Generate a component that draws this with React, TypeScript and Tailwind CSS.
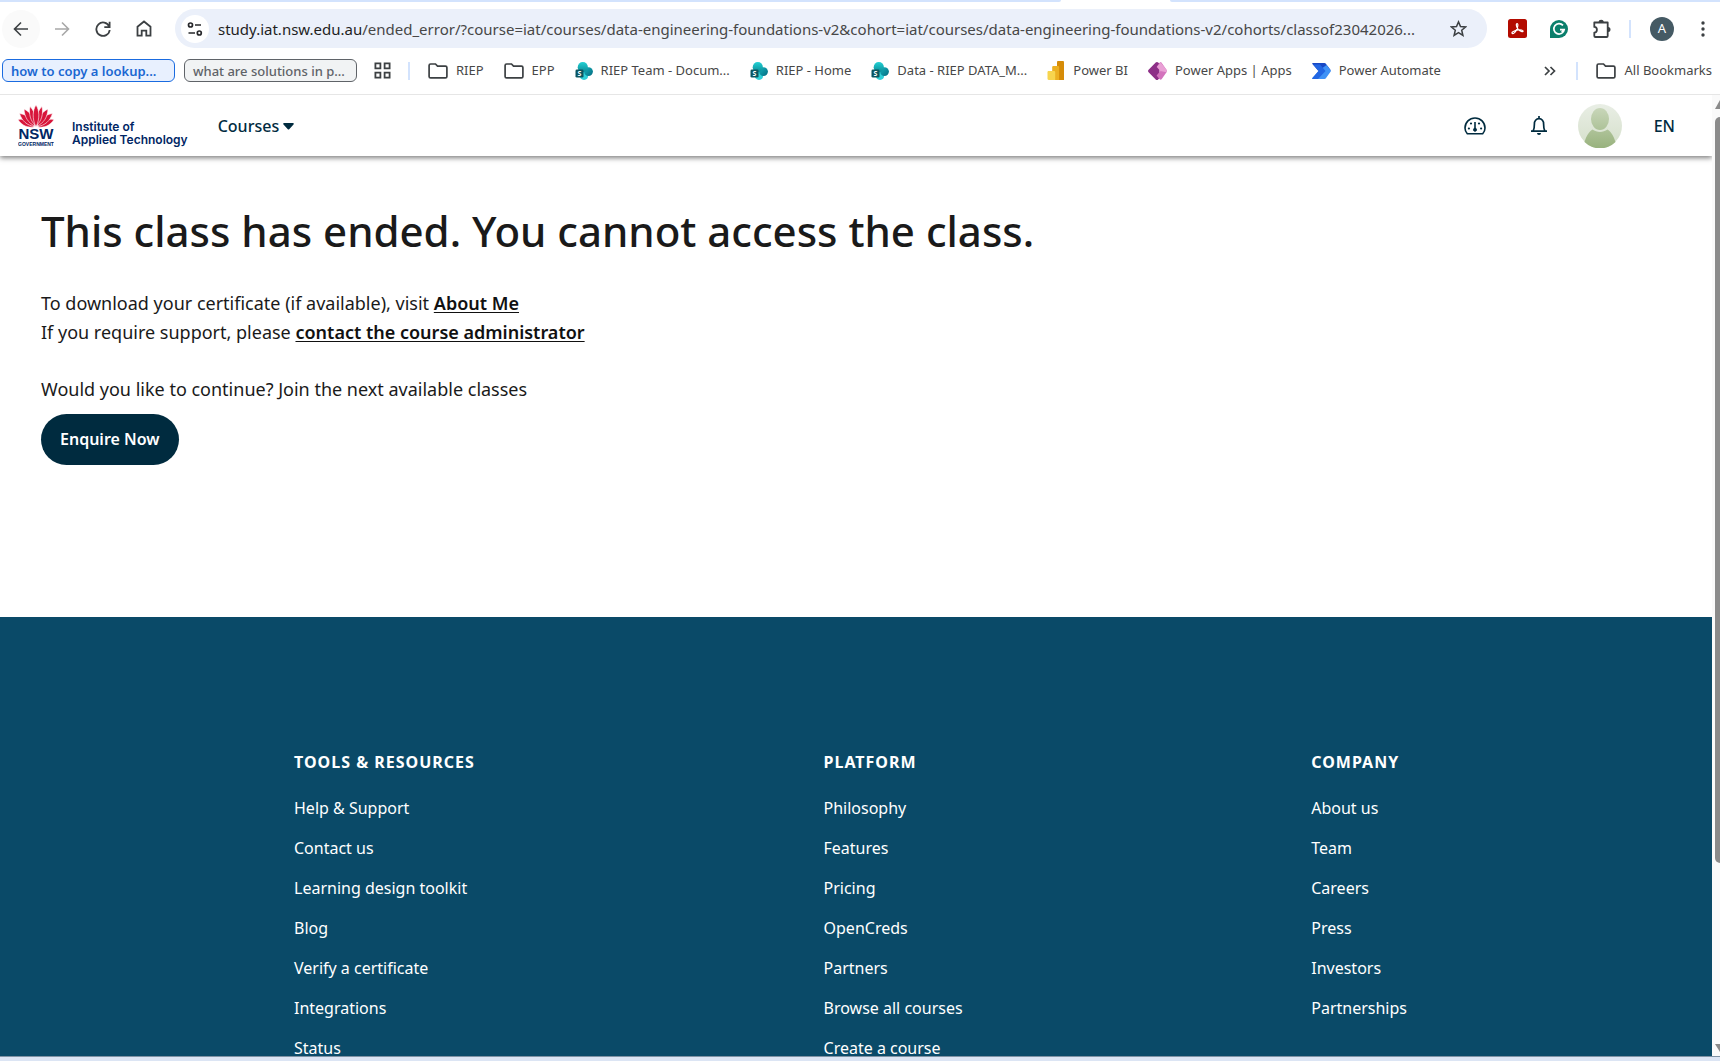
import type { ReactNode } from 'react'

interface Bookmark {
  label: string
  icon: ReactNode
}

const FOOTER = [
  {
    title: 'Tools & Resources',
    links: [
      'Help & Support',
      'Contact us',
      'Learning design toolkit',
      'Blog',
      'Verify a certificate',
      'Integrations',
      'Status',
    ],
  },
  {
    title: 'Platform',
    links: ['Philosophy', 'Features', 'Pricing', 'OpenCreds', 'Partners', 'Browse all courses', 'Create a course'],
  },
  {
    title: 'Company',
    links: ['About us', 'Team', 'Careers', 'Press', 'Investors', 'Partnerships'],
  },
]

function FolderIcon() {
  return (
    <svg width="20" height="18" viewBox="0 0 20 18" fill="none" stroke="#3c4043" strokeWidth="1.7" className="shrink-0">
      <path d="M2.6 2h4.9l2 2.1h7.9c.9 0 1.5.6 1.5 1.4v9c0 .8-.6 1.4-1.5 1.4H2.6c-.9 0-1.5-.6-1.5-1.4V3.4C1.1 2.6 1.7 2 2.6 2z" />
    </svg>
  )
}

function SharePointIcon() {
  return (
    <svg width="18" height="18" viewBox="0 0 18 18" className="shrink-0">
      <defs>
        <linearGradient id="sp-top" x1="0" y1="0" x2="0" y2="1">
          <stop offset="0" stopColor="#22d0d3" />
          <stop offset="1" stopColor="#0a8a96" />
        </linearGradient>
        <linearGradient id="sp-right" x1="0" y1="0" x2="1" y2="1">
          <stop offset="0" stopColor="#14b4bd" />
          <stop offset="1" stopColor="#056a80" />
        </linearGradient>
      </defs>
      <circle cx="9" cy="13.8" r="4.1" fill="#30d0d8" />
      <circle cx="13.5" cy="9.6" r="4.4" fill="url(#sp-right)" />
      <circle cx="7.8" cy="5.2" r="5.1" fill="url(#sp-top)" />
      <rect x="0.5" y="7.6" width="8" height="8" rx="1.3" fill="#0b5560" />
      <text x="4.5" y="14" textAnchor="middle" fontSize="7" fontWeight="700" fill="#fff" fontFamily="Open Sans, sans-serif">
        S
      </text>
    </svg>
  )
}

function PowerBiIcon() {
  return (
    <svg width="18" height="19" viewBox="0 0 18 19" className="shrink-0">
      <path d="M10 1.2C10 .6 10.5 0 11.2 0h4.6c.7 0 1.2.6 1.2 1.2V19h-7z" fill="#d68c08" />
      <path d="M5.2 6.2c0-.6.5-1.2 1.2-1.2h4.5c.7 0 1.2.6 1.2 1.2V19H5.2z" fill="#ecb022" />
      <path d="M.5 11.2c0-.6.5-1.2 1.2-1.2H7c.7 0 1.2.6 1.2 1.2V19H1.7c-.7 0-1.2-.5-1.2-1.2z" fill="#f7d54f" />
    </svg>
  )
}

function PowerAppsIcon() {
  return (
    <svg width="19" height="18" viewBox="0 0 19 18" className="shrink-0">
      <path d="M7.7.6c.7-.7 1.8-.7 2.5 0L11.5 2v14l-1.3 1.4c-.7.7-1.8.7-2.5 0L.6 10.2c-.7-.7-.7-1.7 0-2.4z" fill="#8d2f87" />
      <path d="M8.6 5l3-4.3c.6-.5 1.4-.5 2 0l4.9 7.1c.5.7.5 1.7 0 2.4l-4.9 7.1c-.6.5-1.4.5-2 0l-3-3.8L12.4 9z" fill="#d373bd" />
      <path d="M12.7.6l5.8 7.2c.5.7.5 1.7 0 2.4L12.4 9 9 4.7z" fill="#e9a0d5" />
    </svg>
  )
}

function PowerAutomateIcon() {
  return (
    <svg width="19" height="16" viewBox="0 0 19 16" className="shrink-0">
      <path d="M1 0h11.5c.5 0 .9.2 1.2.5L19 7.4H6L.4 1C0 .5.4 0 1 0z" fill="#1848c4" />
      <path d="M6.500 8L.4 15c-.4.5 0 1 .6 1h11.5c.5 0 .9-.2 1.2-.5L18.7 8.600c.3-.4.3-.8 0-1.200L14.500 2z" fill="#3f92f6" />
      <path d="M6.500 8L.4 15c-.4.5 0 1 .6 1h5L13.500 8 8 1.500H1.200z" fill="#2266e3" />
    </svg>
  )
}

const BOOKMARKS: Bookmark[] = [
  { label: 'RIEP', icon: <FolderIcon /> },
  { label: 'EPP', icon: <FolderIcon /> },
  { label: 'RIEP Team - Docum...', icon: <SharePointIcon /> },
  { label: 'RIEP - Home', icon: <SharePointIcon /> },
  { label: 'Data - RIEP DATA_M...', icon: <SharePointIcon /> },
  { label: 'Power BI', icon: <PowerBiIcon /> },
  { label: 'Power Apps | Apps', icon: <PowerAppsIcon /> },
  { label: 'Power Automate', icon: <PowerAutomateIcon /> },
]

function IconButton({ label, children, className = '' }: { label: string; children: ReactNode; className?: string }) {
  return (
    <button type="button" aria-label={label} className={`flex shrink-0 items-center justify-center ${className}`}>
      {children}
    </button>
  )
}

function Toolbar() {
  return (
    <div className="flex h-[53px] items-center pr-[14px]">
      <div className="flex shrink-0 items-center gap-[3px] pl-[2px]">
        <IconButton label="Back" className="size-[38px] rounded-full bg-[#fafafa]">
          <svg width="16" height="16" viewBox="0 0 16 16" fill="none" stroke="#3c4043" strokeWidth="1.6">
            <path d="M15 8H2M8 1.500L1.500 8 8 14.500" />
          </svg>
        </IconButton>
        <IconButton label="Forward" className="size-[38px]">
          <svg width="16" height="16" viewBox="0 0 16 16" fill="none" stroke="#a8a8a8" strokeWidth="1.6">
            <path d="M1 8h13M8 1.500L14.500 8 8 14.500" />
          </svg>
        </IconButton>
        <IconButton label="Reload" className="size-[38px]">
          <svg width="16" height="16" viewBox="0 0 16 16" fill="none" stroke="#3c4043" strokeWidth="1.8">
            <path d="M14.2 5.500A6.700 6.700 0 1 0 14.700 9M14.600 .8v5.300H9.300" />
          </svg>
        </IconButton>
        <IconButton label="Home" className="size-[38px]">
          <svg width="16" height="17" viewBox="0 0 16 17" fill="none" stroke="#3c4043" strokeWidth="1.8">
            <path d="M1.500 6.700L8 1.500l6.500 5.200v9h-4.200v-5H5.700v5H1.500z" />
          </svg>
        </IconButton>
      </div>
      <div className="ml-3 flex h-[39px] min-w-0 flex-1 items-center rounded-full bg-[#ebf0fa] pr-5 pl-[6px]">
        <IconButton label="View site information" className="size-7 rounded-full bg-white">
          <svg width="16" height="16" viewBox="0 0 16 16" fill="none" stroke="#27282b" strokeWidth="1.7">
            <circle cx="3.5" cy="4" r="2" />
            <path d="M8 4h6M1.500 12H8" />
            <circle cx="12.3" cy="12" r="2" />
          </svg>
        </IconButton>
        <p className="ml-[9px] min-w-0 flex-1 overflow-hidden text-[15px] leading-6 whitespace-nowrap text-[#474747]">
          <span className="text-[#1f1f1f]">study.iat.nsw.edu.au</span>
          /ended_error/?course=iat/courses/data-engineering-foundations-v2&amp;cohort=iat/courses/data-engineering-foundations-v2/cohorts/classof23042026...
        </p>
        <IconButton label="Bookmark this tab">
          <svg width="17" height="17" viewBox="0 0 17 17" fill="none" stroke="#3c4043" strokeWidth="1.5">
            <path d="M8.500 1.900l2 4.700 5.100.4-3.900 3.300 1.200 5-4.400-2.700-4.400 2.700 1.200-5L1.400 7l5.100-.4z" />
          </svg>
        </IconButton>
      </div>
      <div className="ml-[21px] flex shrink-0 items-center">
        <IconButton label="Adobe Acrobat">
          <svg width="19" height="19" viewBox="0 0 19 19">
            <rect width="19" height="19" rx="2.5" fill="#b30b00" />
            <path
              d="M4 14.300c-.8-1.300 3.600-3 6.200-3.400 2.400-.3 5 .2 4.900 1.200-.2 1.100-2.800.2-4.800-1.600-1.700-1.600-2.700-5.800-1.300-6 1.500-.1.9 3.700-.6 6.600-1.300 2.500-3.600 4.500-4.400 3.200z"
              fill="none"
              stroke="#fff"
              strokeWidth="1.2"
            />
          </svg>
        </IconButton>
        <IconButton label="Grammarly" className="ml-[23px]">
          <svg width="18" height="18" viewBox="0 0 18 18">
            <path d="M9 0a9 9 0 1 1 0 18H0V9a9 9 0 0 1 9-9z" fill="#0b7f6c" />
            <path d="M13 5.400A5.200 5.200 0 1 0 14.200 9.600H10M11.700 12.200l2.500-2.600" fill="none" stroke="#fff" strokeWidth="1.7" />
          </svg>
        </IconButton>
        <IconButton label="Extensions" className="ml-6">
          <svg width="20" height="20" viewBox="0 0 20 20" fill="none" stroke="#3c4043" strokeWidth="1.8">
            <path d="M2.300 3.500h13.400v13.400c0 .8-.3 1.100-1.100 1.100H3.400c-.8 0-1.100-.3-1.100-1.100v-3.300c3.500-.2 3.500-5.500 0-5.700z" strokeLinejoin="round" />
            <path d="M7 3a2 2 0 0 1 4 0zM16 8.500a2 2 0 0 1 0 4z" fill="#3c4043" stroke="none" />
            <path d="M7.500 3.300a1.700 1.700 0 0 1 3.400 0M16 9a1.500 1.500 0 0 1 0 3.200" />
          </svg>
        </IconButton>
        <span className="ml-[17px] h-[18px] w-[2px] bg-[#d3e3fd]" />
        <IconButton label="Profile" className="ml-[19px] size-6 rounded-full bg-[#455a64] text-[13px] text-white">
          A
        </IconButton>
        <IconButton label="Chrome menu" className="ml-[26px]">
          <svg width="6" height="18" viewBox="0 0 6 18" fill="#3c4043">
            <circle cx="3" cy="3" r="1.7" />
            <circle cx="3" cy="9" r="1.7" />
            <circle cx="3" cy="15" r="1.7" />
          </svg>
        </IconButton>
      </div>
    </div>
  )
}

function BookmarksBar() {
  return (
    <div className="flex h-10 items-center border-b border-[#e6e6e6] pr-2 pb-2 pl-[2px] text-[13px] whitespace-nowrap text-[#474747]">
      <button type="button" className="h-[23px] w-[173px] shrink-0 rounded-md border border-[#1a6be0] bg-[#e8f0fe] pl-2 text-left leading-5 font-semibold text-[#1a67d2]">
        how to copy a lookup...
      </button>
      <button type="button" className="ml-[9px] h-[23px] w-[173px] shrink-0 rounded-md border border-[#5f6368] bg-[#f1f3f4] pl-2 text-left leading-5 font-medium text-[#5f6368]">
        what are solutions in p...
      </button>
      <IconButton label="Tab groups" className="ml-[17px]">
        <svg width="17" height="17" viewBox="0 0 17 17" fill="none" stroke="#3c4043" strokeWidth="1.8">
          <path d="M1.400 1.400h5v5h-5zM10.600 1.400h5v5h-5zM1.400 10.600h5v5h-5zM10.600 10.600h5v5h-5z" />
        </svg>
      </IconButton>
      <span className="ml-[17px] h-[18px] w-[2px] shrink-0 bg-[#d3e3fd]" />
      <nav aria-label="Bookmarks" className="ml-[18px] flex min-w-0 flex-1 items-center gap-5 overflow-hidden">
        {BOOKMARKS.map((b) => (
          <a key={b.label} href="#" className="flex shrink-0 items-center gap-2">
            {b.icon}
            {b.label}
          </a>
        ))}
      </nav>
      <IconButton label="More bookmarks">
        <svg width="12" height="10" viewBox="0 0 12 10" fill="none" stroke="#3c4043" strokeWidth="1.7">
          <path d="M1 1l4 4-4 4M6.500 1l4 4-4 4" />
        </svg>
      </IconButton>
      <span className="ml-5 h-[18px] w-[2px] shrink-0 bg-[#d3e3fd]" />
      <a href="#" className="ml-[18px] flex shrink-0 items-center gap-2">
        <FolderIcon />
        All Bookmarks
      </a>
    </div>
  )
}

function NswLogo() {
  return (
    <svg width="36" height="41" viewBox="0 0 36 41" className="shrink-0">
      <g fill="#d7153a" stroke="#fff" strokeWidth="0.6">
        <path d="M0 14.500c6-1 12 1 16 7.500-6 .8-12-1-16-7.500zM36 14.500c-6-1-12 1-16 7.500 6 .8 12-1 16-7.500z" />
        <path d="M1.500 8.500c7 1 12 5 15 13C9 20.500 4 16 1.500 8.500zM34.500 8.500c-7 1-12 5-15 13C27 20.500 32 16 34.500 8.500z" />
        <path d="M6 4c6 3 10 8 11 17C10 18 6.500 12 6 4zM30 4c-6 3-10 8-11 17C26 18 29.500 12 30 4z" />
        <path d="M12 1.500c4 4 6 10 5.500 19C12.500 16 10.500 9 12 1.500zM24 1.500c-4 4-6 10-5.500 19C23.500 16 25.500 9 24 1.500z" />
        <path d="M18 0c3.500 5 4 14 0 22-4-8-3.500-17 0-22z" />
      </g>
      <text x="18" y="34" textAnchor="middle" fontSize="15" fontWeight="700" fill="#002664" fontFamily="Liberation Sans, sans-serif">
        NSW
      </text>
      <text x="18" y="40.5" textAnchor="middle" fontSize="5" fontWeight="700" fill="#002664" fontFamily="Liberation Sans, sans-serif">
        GOVERNMENT
      </text>
    </svg>
  )
}

function SiteHeader() {
  return (
    <header className="relative flex h-[61px] shrink-0 items-center bg-white pr-[37px] pl-[18px] text-[16px] font-medium text-[#002b3f] shadow-[0_2px_5px_rgba(0,0,0,0.5)]">
      <a href="#" className="flex items-end gap-[18px] font-['Inter','Liberation_Sans',sans-serif] text-[12px] leading-[13px] font-semibold text-[#002664]">
        <NswLogo />
        <span>
          Institute of
          <br />
          Applied Technology
        </span>
      </a>
      <button type="button" className="ml-[30px] flex items-center gap-1">
        Courses
        <svg width="11" height="7" viewBox="0 0 11 7" fill="#002b3f" className="mt-[2px]">
          <path d="M1.200 0h8.600c.9 0 1.300 1 .7 1.600L6.200 6.300c-.4.4-1 .4-1.400 0L.5 1.600C-.1 1 .3 0 1.200 0z" />
        </svg>
      </button>
      <div className="ml-auto flex items-center">
        <IconButton label="Dashboard">
          <svg width="22" height="18" viewBox="0 0 22 18" fill="none" stroke="#002b3f" strokeWidth="1.6" strokeLinejoin="round">
            <path d="M3.300 16.800C1.800 15.200 1 13.200 1 11a10 10 0 0 1 20 0c0 2.200-.8 4.200-2.300 5.800z" />
            <path d="M11 5v7" />
            <circle cx="11" cy="12.7" r="1.5" fill="#002b3f" strokeWidth="1" />
            <g fill="#002b3f" stroke="none">
              <circle cx="7" cy="6.5" r="1.1" />
              <circle cx="15" cy="6.5" r="1.1" />
              <circle cx="4.9" cy="11.5" r="1.1" />
              <circle cx="17.1" cy="11.5" r="1.1" />
            </g>
          </svg>
        </IconButton>
        <IconButton label="Notifications" className="ml-[45px]">
          <svg width="16" height="19" viewBox="0 0 16 19" fill="none" stroke="#002b3f" strokeWidth="1.7">
            <path d="M8 0v2.500M0 15.200h16M2.200 15c1-1.700 1.200-3.200 1.200-7A4.600 4.900 0 0 1 8 2.600 4.600 4.900 0 0 1 12.600 8c0 3.800.2 5.300 1.200 7" />
            <path d="M6 17h4a2 2 0 0 1-4 0z" fill="#002b3f" stroke="none" />
          </svg>
        </IconButton>
        <IconButton label="Account" className="ml-[31px]">
          <svg width="44" height="44" viewBox="0 0 44 44">
            <defs>
              <linearGradient id="avatar-bg" x1="0" y1="0" x2="0" y2="1">
                <stop offset="0" stopColor="#e9eee5" />
                <stop offset="1" stopColor="#d4dfca" />
              </linearGradient>
              <linearGradient id="avatar-fg" gradientUnits="userSpaceOnUse" x1="0" y1="4" x2="0" y2="44">
                <stop offset="0" stopColor="#c8d6b9" />
                <stop offset="1" stopColor="#98b27d" />
              </linearGradient>
            </defs>
            <circle cx="22" cy="22" r="22" fill="url(#avatar-bg)" />
            <path d="M14.500 25.500c4.500 3.300 10.500 3.300 15 0 4 2.500 6.500 7.500 8 12.500a22 22 0 0 1-31 0c1.500-5 4-10 8-12.500z" fill="url(#avatar-fg)" />
            <ellipse cx="22" cy="15" rx="9" ry="11" fill="url(#avatar-fg)" />
          </svg>
        </IconButton>
        <button type="button" className="ml-8">
          EN
        </button>
      </div>
    </header>
  )
}

function SiteFooter() {
  return (
    <footer className="mt-[152px] flex flex-1 shrink-0 items-start justify-between bg-[#0a4a68] pt-[133px] pr-[305px] pl-[294px] text-[16px] leading-6 text-white">
      {FOOTER.map((col) => (
        <section key={col.title}>
          <h2 className="font-bold tracking-[1px] uppercase">{col.title}</h2>
          <ul className="mt-[22px] flex flex-col gap-4">
            {col.links.map((link) => (
              <li key={link}>
                <a href="#">{link}</a>
              </li>
            ))}
          </ul>
        </section>
      ))}
    </footer>
  )
}

function Scrollbar() {
  return (
    <div className="flex w-2 shrink-0 flex-col items-end overflow-hidden bg-[#fafafa]">
      <svg width="5" height="9" viewBox="0 0 5 9" fill="#8b8b8b" className="mt-[5px] shrink-0">
        <path d="M0 9l5-9v9z" />
      </svg>
      <div className="mt-2 h-[746px] w-[5px] rounded-l-md bg-[#8b8b8b]" />
      <svg width="5" height="8" viewBox="0 0 5 8" fill="#8b8b8b" className="mt-auto mb-1 shrink-0">
        <path d="M0 0h5v8z" />
      </svg>
    </div>
  )
}

export default function App() {
  return (
    <div className="flex h-screen flex-col overflow-hidden bg-white font-['Noto_Sans','Open_Sans',sans-serif]">
      {/* bottom edge of the tab strip, open under the active tab */}
      <div className="flex h-[2px] shrink-0">
        <div className="flex-1 rounded-br-full bg-[#d3e3fd]" />
        <div className="w-[109px]" />
        <div className="w-[32%] rounded-bl-full bg-[#d3e3fd]" />
      </div>
      <Toolbar />
      <BookmarksBar />
      <div className="flex min-h-0 flex-1">
        <div className="flex min-w-0 flex-1 flex-col overflow-hidden">
          <SiteHeader />
          <main className="shrink-0 px-[41px] pt-[46px] text-[18px] leading-[29px] text-[#1a1a1a]">
            <h1 className="text-[42px] leading-[58px] font-medium">
              This class has ended. You cannot access the class.
            </h1>
            <p className="mt-[29px]">
              To download your certificate (if available), visit{' '}
              <a href="#" className="font-semibold text-[#111] underline underline-offset-2">
                About Me
              </a>
              <br />
              If you require support, please{' '}
              <a href="#" className="font-semibold text-[#111] underline underline-offset-2">
                contact the course administrator
              </a>
            </p>
            <p className="mt-7">Would you like to continue? Join the next available classes</p>
            <button type="button" className="mt-[10px] block h-[51px] rounded-full bg-[#002b3f] px-[19px] text-[16px] font-semibold text-white">
              Enquire Now
            </button>
          </main>
          <SiteFooter />
        </div>
        <Scrollbar />
      </div>
      <div className="h-[5px] shrink-0 border-t border-[#7f93a5] bg-[#dce5f4]" />
    </div>
  )
}
